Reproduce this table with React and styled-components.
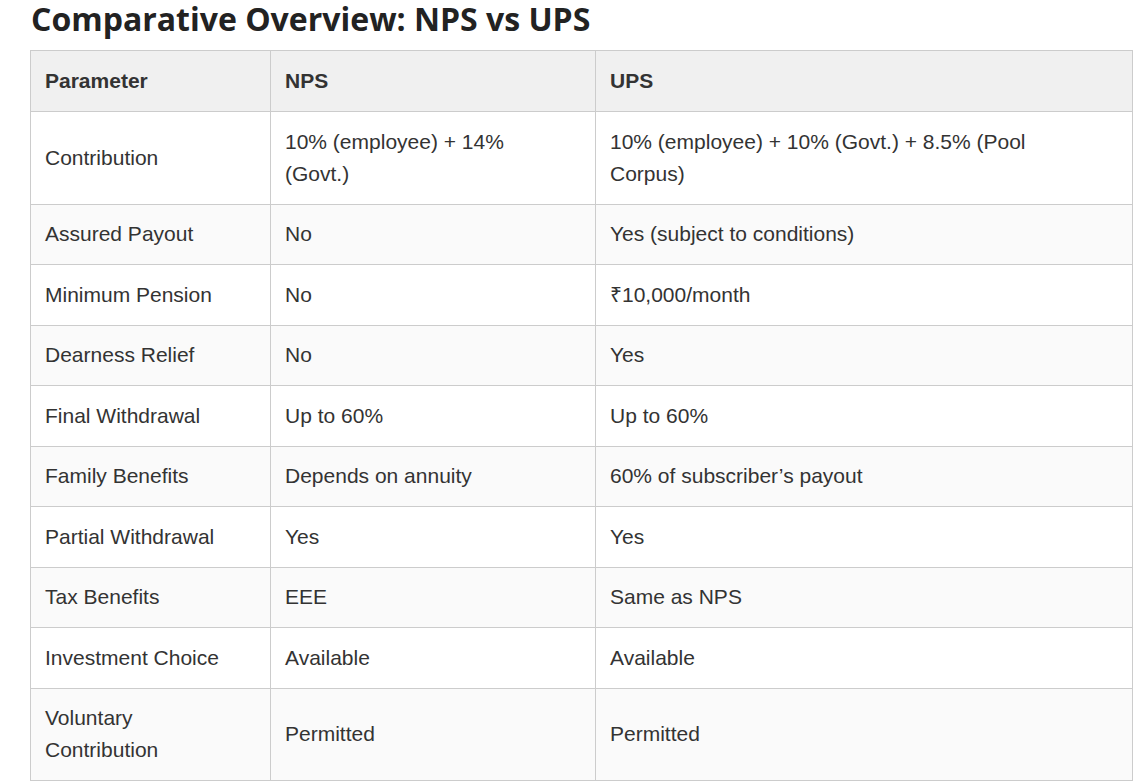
import React from "react"
import styled, { createGlobalStyle } from "styled-components"

const GlobalStyle = createGlobalStyle`
  body {
    margin: 0;
    background: #ffffff;
    font-family: "Liberation Sans", Arial, sans-serif;
  }
`

const Page = styled.div`
  display: flex;
  flex-direction: column;
  padding: 2px 14px 0 30px;
`

const Title = styled.h2`
  font-family: "Open Sans", sans-serif;
  font-weight: 700;
  font-size: 32px;
  line-height: 34px;
  color: #222222;
  margin: 0 0 14px 1px;
`

const Table = styled.table`
  width: 100%;
  table-layout: fixed;
  border-collapse: collapse;
  font-size: 21px;
  line-height: 32px;
  color: #333333;
`

const Col = styled.col`
  width: ${props => props.width || "auto"};
`

const HeadCell = styled.th`
  background: #f0f0f0;
  border: 1px solid #cccccc;
  padding: 14px 30px 14px 14px;
  text-align: left;
  font-weight: 700;
`

const Row = styled.tr`
  background: ${props => (props.$striped ? "#fafafa" : "#ffffff")};
`

const Cell = styled.td`
  border: 1px solid #cccccc;
  padding: 13.75px 30px 13.75px 14px;
  vertical-align: middle;
`

const rows = [
  ["Contribution", "10% (employee) + 14% (Govt.)", "10% (employee) + 10% (Govt.) + 8.5% (Pool Corpus)"],
  ["Assured Payout", "No", "Yes (subject to conditions)"],
  ["Minimum Pension", "No", "₹10,000/month"],
  ["Dearness Relief", "No", "Yes"],
  ["Final Withdrawal", "Up to 60%", "Up to 60%"],
  ["Family Benefits", "Depends on annuity", "60% of subscriber’s payout"],
  ["Partial Withdrawal", "Yes", "Yes"],
  ["Tax Benefits", "EEE", "Same as NPS"],
  ["Investment Choice", "Available", "Available"],
  ["Voluntary Contribution", "Permitted", "Permitted"],
]

const App = () => {
  return (
    <Page>
      <GlobalStyle />
      <Title>Comparative Overview: NPS vs UPS</Title>
      <Table>
        <colgroup>
          <Col width="240px" />
          <Col width="325px" />
          <Col />
        </colgroup>
        <thead>
          <tr>
            <HeadCell>Parameter</HeadCell>
            <HeadCell>NPS</HeadCell>
            <HeadCell>UPS</HeadCell>
          </tr>
        </thead>
        <tbody>
          {rows.map((row, i) => (
            <Row key={row[0]} $striped={i % 2 === 1}>
              {row.map((text, j) => (
                <Cell key={j}>{text}</Cell>
              ))}
            </Row>
          ))}
        </tbody>
      </Table>
    </Page>
  )
}

export default App
